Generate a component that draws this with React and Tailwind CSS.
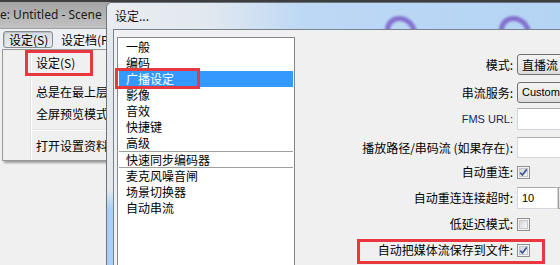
import React from "react";

const cjk = "font-['Noto_Sans_CJK_SC','Noto_Sans',sans-serif]";

function Check({ checked }) {
  return (
    <div className="relative w-[13px] h-[13px] border border-[#8e8f8f] bg-[#f4f4f4] p-[1px]">
      <div className="w-full h-full border border-[#c4c8ce] bg-gradient-to-br from-[#d3d6db] to-[#f7f7f7]" />
      {checked && (
        <svg className="absolute inset-0" width="11" height="11" viewBox="0 0 11 11">
          <path d="M2.2 5.6 L4.4 8 L8.8 2.4" fill="none" stroke="#3f5393" strokeWidth="1.7" strokeLinejoin="round" />
        </svg>
      )}
    </div>
  );
}

function Dropdown({ text, latin }) {
  return (
    <div className="h-[21px] w-[120px] border border-[#707070] rounded-[3px] bg-gradient-to-b from-[#f3f3f3] via-[#ebebeb] to-[#dcdcdc] flex items-center pl-[4px]">
      <span className={latin ? "font-['Liberation_Sans',sans-serif] text-[11px] text-black" : "text-[12px] text-black"}>{text}</span>
    </div>
  );
}

function Input({ h }) {
  return <div className={`${h} w-[120px] border border-[#d3d6dc] border-t-[#abadb3] bg-white`} />;
}

const listItems = [
  "一般",
  "编码",
  "广播设定",
  "影像",
  "音效",
  "快捷键",
  "高级",
  "快速同步编码器",
  "麦克风噪音闸",
  "场景切换器",
  "自动串流",
];

function Row({ label, h, mt, children, labelClass }) {
  return (
    <div className={`flex items-center ${h} ${mt}`}>
      <div className={`w-[218px] text-right whitespace-nowrap leading-[16px] ${labelClass || ""}`}>{label}</div>
      <div className="ml-[4px] flex items-center">{children}</div>
    </div>
  );
}

export default function App() {
  return (
    <div className={`relative w-[560px] h-[265px] overflow-hidden bg-[#f0f0f0] text-[12px] text-black ${cjk}`}>
      {/* background window */}
      <div className="flex flex-col h-full">
        <div className="h-[28px] border-t-2 border-[#3e3e3e] bg-gradient-to-b from-[#a3a3a3] to-[#c3c3c3] flex items-center">
          <span className="font-['Noto_Sans',sans-serif] text-[12px] text-[#1a1a1a] leading-[16px] pb-[1px] whitespace-nowrap">e: Untitled - Scene</span>
        </div>
        <div className="h-[22px] bg-[#edf0f4] border-t border-[#9aa0a6] flex items-center">
          <div className="ml-[3px] h-[17px] w-[50px] border border-[#8a8c8e] rounded-[3px] bg-gradient-to-b from-[#d9dde2] to-[#e6e9ed] shadow-[inset_1px_1px_1px_rgba(0,0,0,0.15)] flex items-center pl-[5px]">
            <span className="leading-[14px]">设定(S)</span>
          </div>
          <span className="ml-[8px] leading-[14px] whitespace-nowrap">设定档(P)</span>
        </div>
        <div className="flex-1 bg-[#f0f0f0]" />
      </div>

      {/* dropdown menu */}
      <div className="absolute left-[2px] top-[49px] w-[130px] h-[112px] border border-[#979797] bg-[#f0f0f0] shadow-[2px_2px_2px_rgba(0,0,0,0.35)] flex">
        <div className="w-[28px] shrink-0 border-r border-[#e0e1e1] shadow-[1px_0_0_#ffffff]" />
        <div className="flex flex-col flex-1 pt-[2px] ml-[1px]">
          <div className="h-[22px] flex items-center pl-[4px] whitespace-nowrap leading-[16px]">设定(S)</div>
          <div className="h-[7px]" />
          <div className="h-[22px] flex items-center pl-[4px] whitespace-nowrap leading-[16px]">总是在最上层</div>
          <div className="h-[22px] flex items-center pl-[4px] whitespace-nowrap leading-[16px]">全屏预览模式</div>
          <div className="h-[10px] flex items-center">
            <div className="w-full h-[2px] border-t border-[#e0e0e0] border-b border-b-white" />
          </div>
          <div className="h-[22px] flex items-center pl-[4px] whitespace-nowrap leading-[16px]">打开设置资料</div>
        </div>
      </div>

      {/* settings dialog */}
      <div className="absolute left-[106px] top-[2px] w-[470px] h-[290px] border border-[#6b7580] rounded-tl-[6px] flex flex-col bg-[#b5d4f4] overflow-hidden">
        <div className="relative h-[26px] shrink-0 overflow-hidden bg-[linear-gradient(90deg,#e9edf1_0%,#e1e8ef_22%,#bdd8f5_42%,#b4d4f4_100%)] flex items-center pl-[8px]">
          <span className="leading-[16px] text-[#111]">设定...</span>
          <div className="absolute left-[278px] top-[13px] w-[32px] h-[20px] rounded-tl-[14px] rounded-tr-[18px] border-[5px] border-b-0 border-[#7758c6] opacity-80 blur-[1px]" />
          <div className="absolute left-[392px] top-[13px] w-[32px] h-[20px] rounded-tl-[14px] rounded-tr-[18px] border-[5px] border-b-0 border-[#7758c6] opacity-80 blur-[1px]" />
        </div>
        <div className="flex flex-1">
          <div className="w-[6px] shrink-0 bg-[linear-gradient(180deg,#e3e8ed_0%,#e6e9ec_60%,#aacff4_67%,#a8cef4_100%)]" />
          <div className="flex-1 border-l border-t border-[#76828e] bg-[#f0f0f0] flex pl-[3px] pt-[7px]">
            {/* list */}
            <div className="w-[178px] h-[260px] shrink-0 border border-[#828790] bg-white pt-[1px] flex flex-col">
              {listItems.map((t) => {
                const sel = t === "广播设定";
                const sep = t === "快速同步编码器";
                return (
                  <div
                    key={t}
                    className={`mx-[1px] pl-[7px] flex items-center whitespace-nowrap leading-[16px] ${
                      sep ? "h-[17px] border-t border-b border-[#a0a0a0]" : "h-[16px]"
                    } ${sel ? "bg-[#3399ff] text-white" : "text-black"}`}
                  >
                    {t}
                  </div>
                );
              })}
            </div>
            {/* form */}
            <div className="flex flex-col pt-[17px]">
              <Row label="模式:" h="h-[21px]" mt="">
                <Dropdown text="直播流" />
              </Row>
              <Row label="串流服务:" h="h-[21px]" mt="mt-[7px]">
                <Dropdown text="Custom" latin />
              </Row>
              <Row label="FMS URL:" h="h-[22px]" mt="mt-[5px]" labelClass="font-['Liberation_Sans',sans-serif] text-[11px] text-[#142c5c]">
                <Input h="h-[22px]" />
              </Row>
              <Row label="播放路径/串码流 (如果存在):" h="h-[21px]" mt="mt-[7px]">
                <Input h="h-[21px]" />
              </Row>
              <Row label="自动重连:" h="h-[20px]" mt="mt-[4px]">
                <Check checked />
              </Row>
              <Row label="自动重连连接超时:" h="h-[22px]" mt="mt-[5px]">
                <div className="flex">
                  <div className="h-[22px] w-[41px] border border-[#d3d6dc] border-t-[#abadb3] bg-white flex items-center pl-[4px]">
                    <span className="font-['Liberation_Sans',sans-serif] text-[11px]">10</span>
                  </div>
                  <div className="h-[22px] w-[16px] flex flex-col border border-[#a0a0a0] bg-gradient-to-b from-[#f2f2f2] to-[#dedede]" />
                </div>
              </Row>
              <Row label="低延迟模式:" h="h-[20px]" mt="mt-[5px]">
                <Check />
              </Row>
              <Row label="自动把媒体流保存到文件:" h="h-[20px]" mt="mt-[6px]">
                <Check checked />
              </Row>
            </div>
          </div>
        </div>
      </div>

      {/* red annotation boxes */}
      <div className="absolute left-[25px] top-[50px] w-[68px] h-[26px] border-[3px] border-[#e8373e]" />
      <div className="absolute left-[115px] top-[68px] w-[85px] h-[21px] border-[3px] border-[#e8373e]" />
      <div className="absolute left-[357px] top-[239px] w-[188px] h-[25px] border-[3px] border-[#e8373e]" />
    </div>
  );
}
